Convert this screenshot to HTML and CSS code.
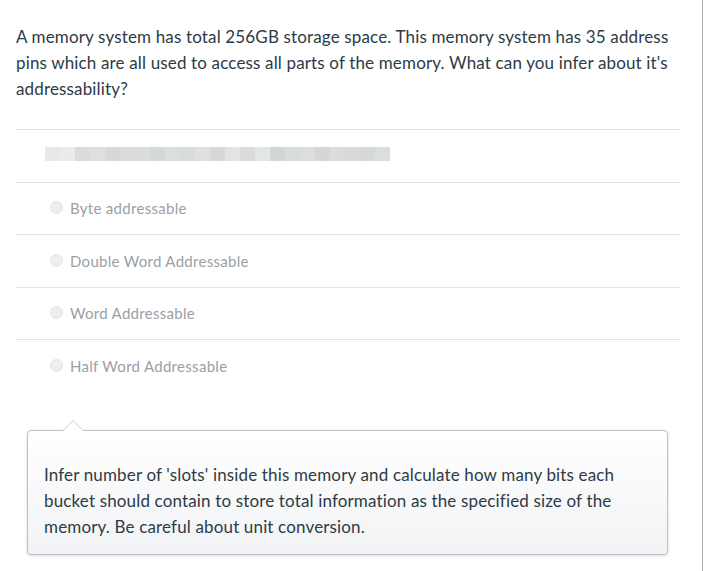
FILE: index.html
```html
<!DOCTYPE html>
<html lang="en">
<head>
    <meta charset="UTF-8">
    <title>Quiz question</title>
    <link rel="stylesheet" href="styles.css">
</head>
<body>
    <div id="page">
        <div class="question">
            <p class="question_text">A memory system has total 256GB storage space. This memory system has 35 address pins which are all used to access all parts of the memory. What can you infer about it's addressability?</p>

            <div class="answers">
                <div class="answer blurred_row">
                    <div class="blurred"></div>
                </div>
                <div class="answer">
                    <span class="radio"></span>
                    <span class="answer_text">Byte addressable</span>
                </div>
                <div class="answer">
                    <span class="radio"></span>
                    <span class="answer_text">Double Word Addressable</span>
                </div>
                <div class="answer">
                    <span class="radio"></span>
                    <span class="answer_text">Word Addressable</span>
                </div>
                <div class="answer">
                    <span class="radio"></span>
                    <span class="answer_text">Half Word Addressable</span>
                </div>
            </div>

            <div class="hint">
                Infer number of 'slots' inside this memory and calculate how many bits each bucket should contain to store total information as the specified size of the memory. Be careful about unit conversion.
            </div>
        </div>
    </div>
</body>
</html>
```

FILE: styles.css
```css
body {
    margin: 0;
    background-color: #fff;
    font-family: Lato, "Open Sans", sans-serif;
    color: #2d3b45;
}
#page {
    width: 702px;
    min-height: 571px;
    border-right: 1px solid #a9a9a9;
}
.question {
    padding: 24px 22px 0 16px;
}
.question_text {
    margin: 0;
    font-size: 17px;
    letter-spacing: 0.15px;
    line-height: 26px;
}
.answers {
    margin-top: 27px;
}
.answer {
    display: flex;
    align-items: center;
    height: 51.5px;
    border-top: 1px solid #e3e3e3;
    padding-left: 34px;
}
.blurred_row {
    padding-left: 29px;
}
.blurred {
    width: 345px;
    height: 14px;
    margin-top: -4px;
    background: linear-gradient(to right,
        #e8e8e8 0 15px, #ebebeb 15px 30px, #dcdcdc 30px 45px, #dedfe0 45px 60px,
        #d5d9d9 60px 75px, #dcdcdb 75px 105px, #d2d9d8 105px 120px, #dcddde 120px 135px,
        #d8dcdc 135px 150px, #e0e0e0 150px 165px, #d7d9d8 165px 180px, #e3e3e1 180px 195px,
        #dadbda 195px 210px, #e3e6e6 210px 225px, #d2d6d7 225px 240px, #d8dcdd 240px 255px,
        #dcdddf 255px 270px, #d3d7da 270px 285px, #dcdddb 285px 300px, #d9d9d6 300px 315px,
        #d5d9da 315px 330px, #dcdddf 330px 345px);
}
.radio {
    width: 11px;
    height: 11px;
    border-radius: 50%;
    background-color: #eeeeee;
    border: 1px solid #e3e3e3;
    margin-right: 7px;
    margin-top: -1px;
}
.answer_text {
    font-size: 15px;
    letter-spacing: 0.3px;
    color: #9aa0a6;
}
.hint {
    position: relative;
    margin: 38px 12px 0 11px;
    padding: 31px 16px 14px 16px;
    border: 1px solid #b9c0c7;
    border-radius: 4px;
    background: linear-gradient(to bottom, #ffffff, #f2f3f5);
    box-shadow: 0 1px 3px rgba(0, 0, 0, 0.15);
    font-size: 17px;
    letter-spacing: 0.15px;
    line-height: 26px;
}
.hint::before {
    content: "";
    position: absolute;
    top: -11px;
    left: 34px;
    border-left: 11px solid transparent;
    border-right: 11px solid transparent;
    border-bottom: 11px solid #c9ced4;
}
.hint::after {
    content: "";
    position: absolute;
    top: -10px;
    left: 35px;
    border-left: 10px solid transparent;
    border-right: 10px solid transparent;
    border-bottom: 10px solid #fff;
}
```
